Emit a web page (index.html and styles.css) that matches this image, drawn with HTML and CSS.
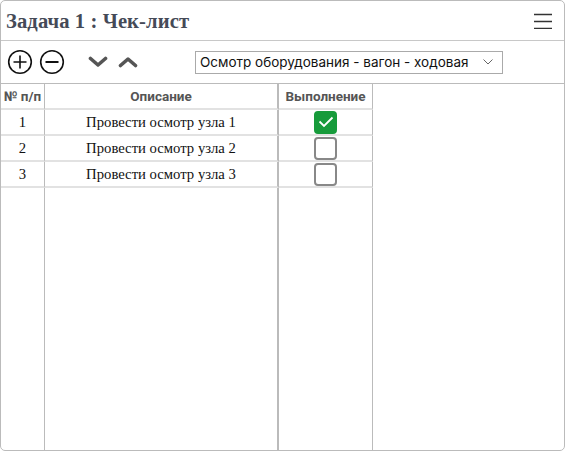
FILE: index.html
```html
<!DOCTYPE html>
<html lang="ru">
<head>
<meta charset="utf-8">
<title>Чек-лист</title>
<link rel="stylesheet" href="styles.css">
</head>
<body>
<div class="panel">
  <div class="titlebar">
    <div class="title">Задача 1 : Чек-лист</div>
    <svg class="menu" width="18" height="16" viewBox="0 0 18 16"><path d="M0 1.5H18M0 8.5H18M0 15.5H18" stroke="#333" stroke-width="1.5"/></svg>
  </div>
  <div class="toolbar">
    <svg class="ico" width="26" height="26" viewBox="0 0 26 26"><circle cx="13" cy="13" r="11.3" fill="none" stroke="#111" stroke-width="1.6"/><path d="M6.5 13H19.5M13 6.5V19.5" stroke="#111" stroke-width="1.6"/></svg>
    <svg class="ico" width="26" height="26" viewBox="0 0 26 26"><circle cx="13" cy="13" r="11.3" fill="none" stroke="#111" stroke-width="1.6"/><path d="M6.5 13H19.5" stroke="#111" stroke-width="1.8"/></svg>
    <svg class="chev down" width="20" height="12" viewBox="0 0 20 12"><path d="M2.5 2.5L10 9L17.5 2.5" fill="none" stroke="#555" stroke-width="3.6" stroke-linecap="round" stroke-linejoin="round"/></svg>
    <svg class="chev up" width="20" height="12" viewBox="0 0 20 12"><path d="M2.5 9.5L10 3L17.5 9.5" fill="none" stroke="#555" stroke-width="3.6" stroke-linecap="round" stroke-linejoin="round"/></svg>
    <div class="select">
      <span>Осмотр оборудования - вагон - ходовая</span>
      <svg width="10" height="6" viewBox="0 0 10 6"><path d="M0.5 0.5L5 5L9.5 0.5" fill="none" stroke="#666" stroke-width="1"/></svg>
    </div>
  </div>
  <div class="grid">
    <div class="cell head c1">№ п/п</div>
    <div class="cell head c2">Описание</div>
    <div class="cell head c3">Выполнение</div>

    <div class="cell num c1">1</div>
    <div class="cell txt c2">Провести осмотр узла 1</div>
    <div class="cell c3"><span class="box checked"><svg width="16" height="12" viewBox="0 0 16 12"><path d="M1.5 5.5L6 10L14.5 1.5" fill="none" stroke="#fff" stroke-width="1.8"/></svg></span></div>

    <div class="cell num c1">2</div>
    <div class="cell txt c2">Провести осмотр узла 2</div>
    <div class="cell c3"><span class="box"></span></div>

    <div class="cell num c1">3</div>
    <div class="cell txt c2">Провести осмотр узла 3</div>
    <div class="cell c3"><span class="box"></span></div>

    <div class="cell fill c1"></div>
    <div class="cell fill c2"></div>
    <div class="cell fill c3"></div>
  </div>
</div>
</body>
</html>
```

FILE: styles.css
```css
* { box-sizing: border-box; }
html, body { margin: 0; padding: 0; background: #fff; }
.panel {
  width: 565px;
  height: 451px;
  border: 1px solid #bbb;
  border-radius: 5px;
  display: flex;
  flex-direction: column;
  overflow: hidden;
}
.titlebar {
  height: 40px;
  flex: none;
  border-bottom: 1px solid #c8c8c8;
  display: flex;
  align-items: center;
  justify-content: space-between;
  padding: 0 12px 0 5px;
}
.title {
  font-family: "Liberation Serif", "DejaVu Serif", serif;
  font-weight: bold;
  font-size: 20.6px;
  letter-spacing: 0.1px;
  color: #454a57;
  padding-top: 1px;
}
.menu { display: block; margin-top: 1px; }
.toolbar {
  height: 43px;
  flex: none;
  border-bottom: 1px solid #bbb;
  display: flex;
  align-items: center;
  padding-left: 6px;
}
.ico { display: block; margin-right: 6px; }
.chev { display: block; }
.chev.down { margin-left: 17px; }
.chev.up { margin-left: 10px; }
.select {
  margin-left: 57px;
  width: 308px;
  height: 23px;
  border: 1px solid #aaa;
  display: flex;
  align-items: center;
  justify-content: space-between;
  padding: 0 9px 0 4px;
  font-family: Inter, "Noto Sans", sans-serif;
  font-size: 13.5px;
  color: #111;
}
.select svg { display: block; }
.grid {
  flex: 1;
  width: 372px;
  display: grid;
  grid-template-columns: 44px 234px 94px;
  grid-template-rows: 26px 26px 26px 26px 1fr;
}
.cell {
  border-right: 1px solid #bbb;
  border-bottom: 2px solid #e2e2e2;
  display: flex;
  align-items: center;
  justify-content: center;
}
.cell.c2 { border-right: 2px solid #bbb; }
.cell.fill { border-bottom: none; }
.head {
  font-family: Roboto, "Liberation Sans", sans-serif;
  font-weight: bold;
  font-size: 13.5px;
  color: #555;
}
.num, .txt {
  font-family: "Liberation Serif", "DejaVu Serif", serif;
  font-size: 14.7px;
  color: #111;
}
.box {
  width: 23px;
  height: 23px;
  border: 2px solid #888;
  border-radius: 4px;
  display: flex;
  align-items: center;
  justify-content: center;
}
.box.checked {
  background: #179b3b;
  border-color: #179b3b;
}
.box svg { display: block; }
```
